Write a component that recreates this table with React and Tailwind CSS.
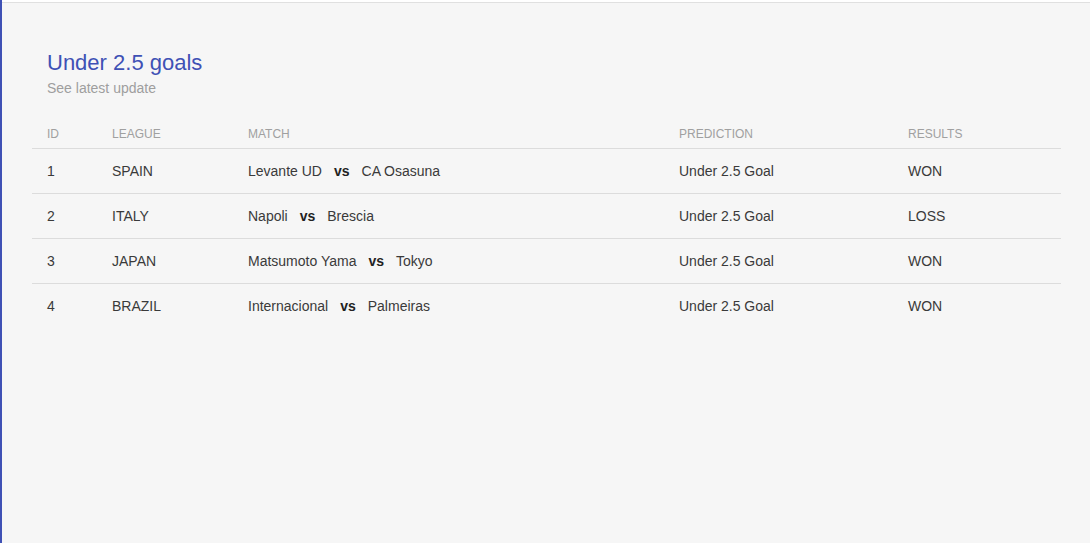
import React from "react";

const rows = [
  { id: 1, league: "SPAIN", home: "Levante UD", away: "CA Osasuna", pred: "Under 2.5 Goal", res: "WON" },
  { id: 2, league: "ITALY", home: "Napoli", away: "Brescia", pred: "Under 2.5 Goal", res: "LOSS" },
  { id: 3, league: "JAPAN", home: "Matsumoto Yama", away: "Tokyo", pred: "Under 2.5 Goal", res: "WON" },
  { id: 4, league: "BRAZIL", home: "Internacional", away: "Palmeiras", pred: "Under 2.5 Goal", res: "WON" },
];

export default function App() {
  return (
    <div className="w-[1090px] h-[543px] bg-white border-l-2 border-[#3f51b5] pt-[2px] overflow-hidden" style={{ fontFamily: '"Liberation Sans", Arial, sans-serif' }}>
      <div className="h-full bg-[#f6f6f6] border-t border-[#e0e0e0] pl-[30px] pr-[29px] pt-[47px]">
        <div className="pl-[15px]">
          <h2 className="text-[22px] leading-[26px] text-[#3f51b5]">Under 2.5 goals</h2>
          <p className="text-[14px] leading-[20px] mt-[2px] text-[#9e9e9e]">See latest update</p>
        </div>
        <table className="w-full table-fixed border-collapse mt-[27px]">
          <colgroup>
            <col className="w-[65px]" />
            <col className="w-[136px]" />
            <col className="w-[431px]" />
            <col className="w-[229px]" />
            <col />
          </colgroup>
          <thead>
            <tr className="border-b border-[#dcdcdc] text-left text-[12px] leading-[18px] text-[#a0a0a0]">
              <th className="font-normal pl-[15px] pb-[5px]">ID</th>
              <th className="font-normal pl-[15px] pb-[5px]">LEAGUE</th>
              <th className="font-normal pl-[15px] pb-[5px]">MATCH</th>
              <th className="font-normal pl-[15px] pb-[5px]">PREDICTION</th>
              <th className="font-normal pl-[15px] pb-[5px]">RESULTS</th>
            </tr>
          </thead>
          <tbody className="text-[14px] text-[#3a3a3a]">
            {rows.map((r, i) => (
              <tr key={r.id} className={i < rows.length - 1 ? "border-b border-[#dcdcdc] h-[45px]" : "h-[45px]"}>
                <td className="pl-[15px]">{r.id}</td>
                <td className="pl-[15px]">{r.league}</td>
                <td className="pl-[15px] whitespace-nowrap">
                  {r.home}
                  <b className="font-bold mx-[12px] text-[#222]">vs</b>
                  {r.away}
                </td>
                <td className="pl-[15px]">{r.pred}</td>
                <td className="pl-[15px]">{r.res}</td>
              </tr>
            ))}
          </tbody>
        </table>
      </div>
    </div>
  );
}
